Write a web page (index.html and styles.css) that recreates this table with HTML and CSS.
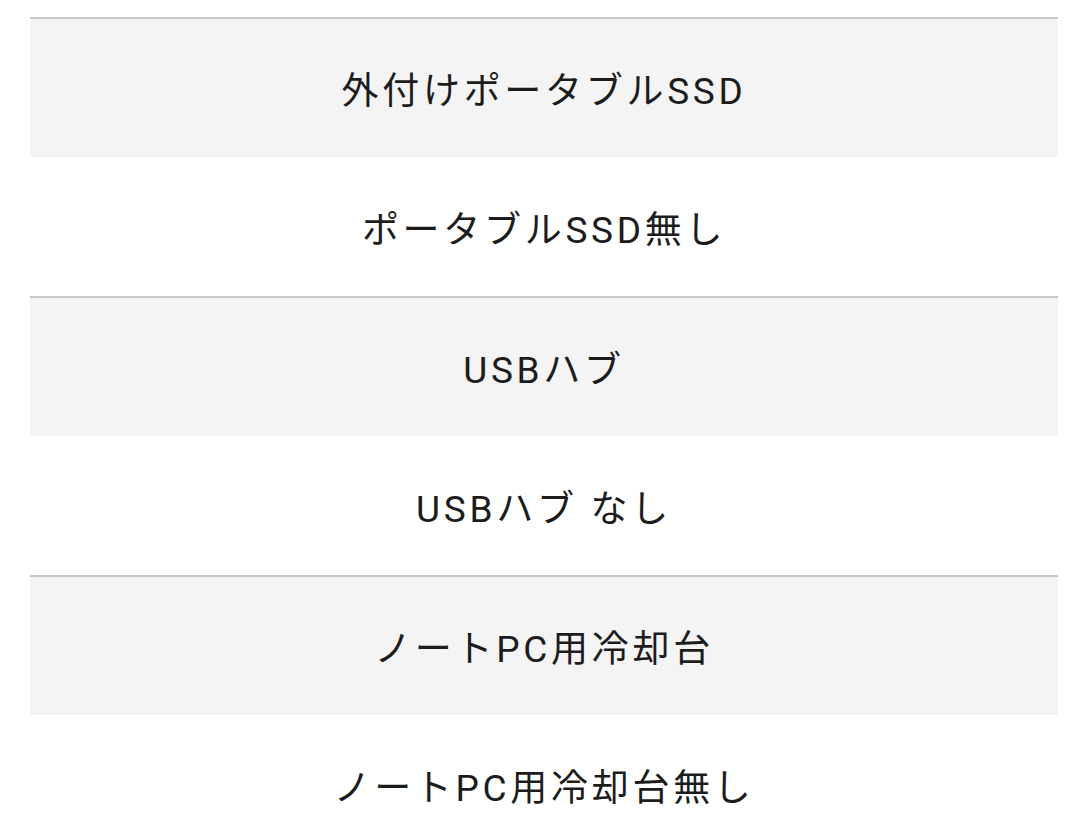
FILE: index.html
```html
<!DOCTYPE html>
<html lang="ja">
<head>
<meta charset="utf-8">
<link rel="stylesheet" href="styles.css">
</head>
<body>
<div class="list">
  <div class="row alt">外付けポータブルSSD</div>
  <div class="row">ポータブルSSD無し</div>
  <div class="row alt">USBハブ</div>
  <div class="row">USBハブ なし</div>
  <div class="row alt">ノートPC用冷却台</div>
  <div class="row">ノートPC用冷却台無し</div>
</div>
</body>
</html>
```
FILE: styles.css
```css
html, body {
  margin: 0;
  padding: 0;
  background: #ffffff;
}
body {
  font-family: Roboto, "Noto Sans CJK JP", sans-serif;
  color: #1c1c1c;
}
.list {
  padding: 17px 22px 0 30px;
  display: flex;
  flex-direction: column;
}
.row {
  height: 139px;
  display: flex;
  align-items: center;
  justify-content: center;
  font-size: 37px;
  letter-spacing: 0.1em;
  box-sizing: border-box;
}
.row.alt {
  height: 140px;
  background: #f4f4f4;
  border-top: 2px solid #c8c8c8;
}
```
